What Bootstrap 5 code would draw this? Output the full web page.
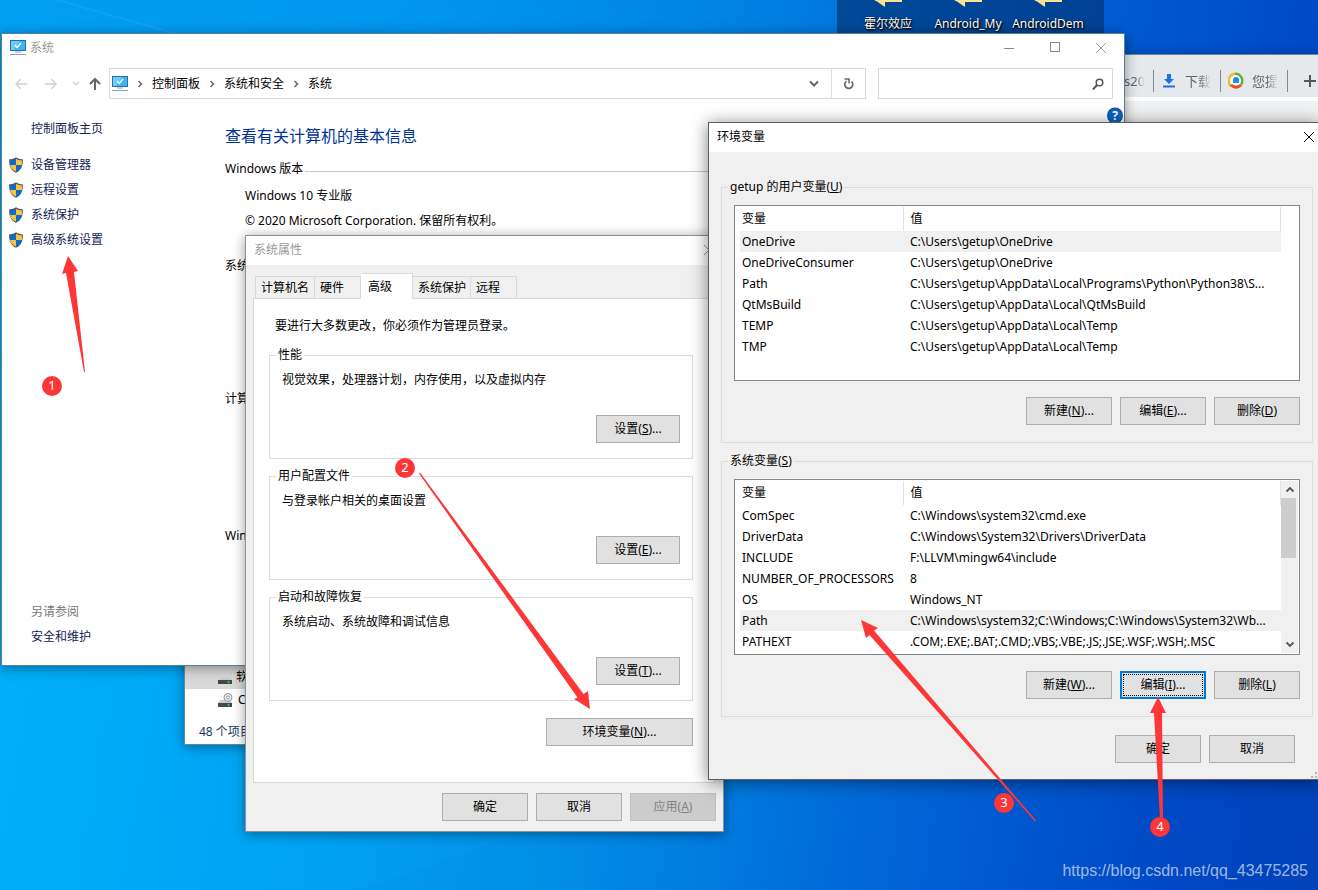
<!DOCTYPE html>
<html lang="zh-CN">
<head>
<meta charset="utf-8">
<meta name="viewport" content="width=device-width, initial-scale=1">
<title>环境变量</title>
<link href="https://cdn.jsdelivr.net/npm/bootstrap@5.3.0/dist/css/bootstrap.min.css" rel="stylesheet">
<style>
  body { font-family: "Noto Sans", "Noto Sans CJK SC", sans-serif; font-size: 12px; line-height: 16px; color: #000; }
  button, input { font: inherit; }
  a { text-decoration: none; }
  .desktop { background: linear-gradient(174deg, rgba(0,80,210,.2), transparent 45%), linear-gradient(100deg, #00b2fb 0%, #00a5f5 28%, #0090e8 48%, #0074dc 62%, #0058d0 78%, #0048c4 90%, #0042b8 100%); }
  .beam { inset: 0; width: 100%; height: 100%; }

  /* windows placed on the desktop */
  .win { position: absolute; display: flex; flex-direction: column; background: #fff; border: 1px solid #8b8b8b; box-shadow: 0 2px 12px rgba(0,0,0,.4); }
  .win-system { left: 1px; top: 33px; right: 193px; height: 633px; border-color: #5a7f99; }
  .win-props { left: 245px; top: 235px; width: 479px; height: 597px; background: #f0f0f0; border-color: #8a9399; }
  .win-env { left: 708px; top: 122px; right: -2px; height: 658px; background: #f0f0f0; border-color: #5c6064; box-shadow: 0 2px 16px rgba(0,0,0,.5); }
  .win-browser { left: 1100px; top: 54px; right: -2px; height: 120px; border-color: #6f8298; }
  .win-explorer { left: 184px; top: 640px; width: 90px; height: 105px; border-color: #68889a; }
  .titlebar { display: flex; align-items: center; background: #fff; height: 29px; flex: none; padding-bottom: 2px; }
  .muted-title { color: #999; }
  .icon-btn { border: 0; background: none; padding: 0; display: flex; align-items: center; justify-content: center; }
  .cap-btn { width: 46px; height: 27px; }

  .files { left: 837px; top: 0; width: 267px; height: 36px; background: rgba(0,56,124,.72); padding: 0 16px 0 11px; }
  .files .item { width: 80px; color: #fff; text-shadow: 0 1px 2px #000, 1px 1px 2px #000; font-size: 12px; white-space: nowrap; }

  .tabstrip { height: 42px; background: #e6e9ec; padding-top: 9px; color: #5f6368; font-size: 13px; }
  .tabstrip .tab-end { border-right: 1px solid #85888c; width: 67px; height: 22px; padding: 0 7px; display: flex; align-items: center; gap: 8px; white-space: nowrap; }
  .tabstrip .tab-end:first-child { width: 53px; padding-left: 23px; }
  .fade-text { -webkit-mask-image: linear-gradient(90deg, #000 55%, transparent); mask-image: linear-gradient(90deg, #000 55%, transparent); }
  .tools { background: #f1f2f3; margin-top: 4px; }

  .navrow { padding: 5px 11px 0 9px; height: 36px; }
  .crumbbox { border: 1px solid #d9d9d9; height: 31px; padding-left: 2px; }
  .crumbbox a { color: #000; }
  .crumb-sep { margin: 0 9px; flex: none; }
  .searchbox { border: 1px solid #d9d9d9; height: 31px; width: 235px; margin-left: 12px; }
  .searchbox input { border: 0; outline: 0; min-width: 0; }
  .side { width: 200px; padding: 17px 0 16px 6px; }
  .side a { color: #151c58; }
  .task { display: flex; align-items: center; height: 25px; gap: 7px; }
  .side .no-icon { padding-left: 23px; }
  .side .home { margin-bottom: 11px; }
  .info { padding: 25px 0 0 23px; }
  .info h1 { font-size: 16px; line-height: 24px; color: #003399; font-weight: 400; margin: 0 0 13px; }
  .info h2 { font-size: 12px; line-height: 16px; font-weight: 400; margin: 0; display: flex; align-items: center; gap: 2px; white-space: nowrap; }
  .info h2::after { content: ""; flex: 1; border-top: 1px solid #c8c8c8; margin-top: 5px; }
  .sec { padding: 6px 0 0 20px; height: 81px; }

  /* classic dialog controls */
  .dlg { background: #e1e1e1; border: 1px solid #adadad; height: 28px; width: 86px; padding: 0; color: #000; border-radius: 0; }
  .dlg-set { width: 84px; }
  .dlg-env { width: 147px; }
  .dlg:disabled { background: #ccc; border-color: #bfbfbf; color: #838383; }
  .dlg-focus { border: 2px solid #0078d7; outline: 1px dotted #000; outline-offset: -4px; }
  .tabs { height: 34px; padding: 8px 0 0 9px; }
  .tabs button { border: 1px solid #d9d9d9; border-bottom: 0; border-left-width: 0; background: #f0f0f0; height: 23px; padding: 0 5px; text-align: left; white-space: nowrap; margin-top: 3px; }
  .tabs button:first-child { border-left-width: 1px; }
  .tabs .active { background: #fff; height: 26px; margin: 0; padding: 0 7px; position: relative; z-index: 1; }
  .w-a { width: 60px; } .w-b { width: 46px; } .w-c { width: 52px; } .w-d { width: 58px; }
  .panel { background: #fff; border: 1px solid #d9d9d9; margin: -1px 8px 0 7px; height: 485px; padding: 19px 21px 0 15px; }
  .panel p { margin: 0 0 13px; padding-left: 6px; }
  .panel-text { padding: 9px 0 27px; }
  .group { border: 1px solid #dcdcdc; padding: 0 12px; margin: 0 0 9px; }
  .group legend { float: none; width: auto; font-size: 12px; line-height: 16px; padding: 0 2px; margin: 0 0 0 -6px; }
  .panel .group { height: 112px; }
  .foot-props { padding: 10px 7px 0; }
  .env-body { padding: 27px 6px 0 12px; }
  .env-body .group { height: 264px; margin-bottom: 10px; }
  .foot-env { padding: 8px 24px 0; }
  .grip { right: 2px; bottom: 1px; }

  .vars { border: 1px solid #828790; background: #fff; height: 176px; margin-top: 10px; padding: 1px 1px 1px 5px; }
  .vars table { table-layout: fixed; width: 100%; }
  .vars th, .vars td { height: 21px; padding: 0 0 0 2px; line-height: 21px; font-weight: 400; white-space: nowrap; }
  .vars th { height: 24px; line-height: 24px; border-right: 1px solid #e2e2e2; }
  .vars th + th, .vars td + td { padding-left: 7px; }
  .vars .picked { background: #f0f0f0; }
  .col-name { width: 163px; }
  .bar { width: 17px; flex: none; }
  .bar-on { background: #f0f0f0; }
  .thumb { height: 60px; width: 15px; background: #cdcdcd; }

  .marks { inset: 0; width: 100%; height: 100%; pointer-events: none; font-size: 13px; }
  .watermark { right: 10px; bottom: 8px; font: 16px/22px "Liberation Sans", Arial, sans-serif; color: rgba(255,255,255,.62); }
</style>
</head>
<body>
<svg width="0" height="0" class="position-absolute" aria-hidden="true">
  <symbol id="pc" viewBox="0 0 16 16">
    <rect x=".5" y=".5" width="15" height="10" fill="#3db5f5" stroke="#2a6fa5"/>
    <path d="M1 1h9L4 10H1z" fill="#6dcbf8"/>
    <path d="M5 5.3l2.2 2.2L11 3" fill="none" stroke="#fff" stroke-width="1.4"/>
    <path d="M5 12h6M0 14.5h16" stroke="#8aa3b8" stroke-width="1.2"/>
  </symbol>
  <symbol id="shield" viewBox="0 0 16 16">
    <path d="M8 .3C6 1.700 3.600 2.300 1.200 2.300c-.3 6 1.300 11 6.800 13.400 5.500-2.400 7.100-7.400 6.800-13.400C12.400 2.300 10 1.700 8 .3z" fill="#4b555e"/>
    <path d="M8 1.700V8H2.100C2 6.500 2 5 2.200 3.300 4.300 3.200 6.300 2.700 8 1.700z" fill="#0a6cce"/>
    <path d="M8 1.700V8h5.900c.1-1.500.1-3-.1-4.700C11.700 3.200 9.700 2.700 8 1.700z" fill="#ffc23c"/>
    <path d="M2.100 8H8v6.600C4.700 13.200 2.700 11.100 2.100 8z" fill="#ffc23c"/>
    <path d="M13.900 8H8v6.600c3.300-1.400 5.300-3.500 5.900-6.600z" fill="#0a6cce"/>
  </symbol>
  <symbol id="chev" viewBox="0 0 6 8"><path d="M1.500 1l3 3-3 3" fill="none" stroke="#666" stroke-width="1.500"/></symbol>
  <symbol id="close" viewBox="0 0 12 12"><path d="M1 1l10 10M11 1L1 11" fill="none" stroke="currentColor"/></symbol>
  <symbol id="folder" viewBox="0 0 28 8"><path d="M0 0h28v2H11v5L3 1.500z" fill="#ffe192"/></symbol>
</svg>

<div class="desktop position-relative overflow-hidden vh-100">
  <svg class="beam position-absolute" aria-hidden="true">
    <path d="M50 -2L190 38" stroke="#18a8ff" stroke-width="2" opacity=".5"/>
    <path d="M340 896L620 800L720 760V890z" fill="#0080e8" opacity=".12"/>
  </svg>

  <div class="files position-absolute d-flex text-center">
    <div class="item"><svg width="28" height="8" class="d-block mx-auto mb-2"><use href="#folder"/></svg><span>霍尔效应</span></div>
    <div class="item"><svg width="28" height="8" class="d-block mx-auto mb-2"><use href="#folder"/></svg><span>Android_My</span></div>
    <div class="item"><svg width="28" height="8" class="d-block mx-auto mb-2"><use href="#folder"/></svg><span>AndroidDem</span></div>
  </div>

  <section class="win win-browser" aria-label="浏览器">
    <div class="tabstrip d-flex align-items-center">
      <div class="tab-end"><span class="fade-text">s20</span></div>
      <div class="tab-end">
        <svg width="16" height="14" viewBox="-1 0 16 14"><path d="M5 0h4v5h3L7 10 2 5h3zM1 11.500h12v2H1z" fill="#1a73e8"/></svg>
        <span class="fade-text">下载</span>
      </div>
      <div class="tab-end">
        <svg width="16" height="17" viewBox="0 0 16 17"><circle cx="8" cy="8.500" r="7.500" fill="#fff"/><path d="M3 14A7 7 0 0 1 7 1.800" fill="none" stroke="#f9b91c" stroke-width="2.500"/><path d="M7 1.800a7 7 0 0 1 6 11" fill="none" stroke="#5cb531" stroke-width="2.500"/><path d="M3 13q5 4.500 10 0" fill="none" stroke="#f0461e" stroke-width="3"/><path d="M8 5a3 3 0 0 1 3 3v3H5V8a3 3 0 0 1 3-3" fill="#1d8fe0"/></svg>
        <span class="fade-text">您提</span>
      </div>
      <button class="icon-btn ms-3" aria-label="新标签页"><svg width="12" height="12"><path d="M6 0v12M0 6h12" stroke="#555" stroke-width="2"/></svg></button>
    </div>
    <div class="tools flex-grow-1"></div>
  </section>

  <section class="win win-explorer" aria-label="资源管理器">
    <div class="d-flex align-items-end pb-1" style="height:48px;background:#d9d9d9;padding-left:33px">
      <svg width="14" height="16" class="me-1"><path d="M2 9h10l2 3H0z" fill="#c9cdcf"/><rect y="11" width="14" height="4" fill="#42484b"/><circle cx="10.500" cy="13" r="1" fill="#2fe04a"/></svg>
      <span>软件</span>
    </div>
    <div class="d-flex align-items-center text-nowrap" style="height:22px;padding-left:33px">
      <svg width="16" height="16" class="me-1"><path d="M2 8h10l2 3H0z" fill="#c9cdcf"/><rect y="11" width="14" height="4" fill="#42484b"/><circle cx="10.500" cy="13" r="1" fill="#2fe04a"/><circle cx="10" cy="5.500" r="4" fill="#e8ebec" stroke="#90979a"/><circle cx="10" cy="5.500" r="1.500" fill="#fff" stroke="#90979a"/></svg>
      <span>CD</span>
    </div>
    <div class="text-nowrap" style="padding:13px 0 0 14px;color:#1e395b">48 个项目</div>
  </section>

  <main class="win win-system">
    <header class="titlebar ps-2">
      <svg width="16" height="16" class="me-1"><use href="#pc"/></svg>
      <span class="muted-title flex-grow-1">系统</span>
      <button class="icon-btn cap-btn" aria-label="最小化"><svg width="10" height="10"><path d="M0 5.500h10" stroke="#888"/></svg></button>
      <button class="icon-btn cap-btn" aria-label="最大化"><svg width="11" height="11"><rect x=".5" y=".5" width="9" height="9" fill="none" stroke="#888"/></svg></button>
      <button class="icon-btn cap-btn muted-title" aria-label="关闭"><svg width="12" height="12"><use href="#close"/></svg></button>
    </header>
    <div class="navrow d-flex align-items-center">
      <button class="icon-btn px-1" aria-label="后退"><svg width="12" height="12"><path d="M12 6H1M6 1L1 6l5 5" fill="none" stroke="#d2d2d2" stroke-width="1.500"/></svg></button>
      <button class="icon-btn px-1 ms-2 me-1" aria-label="前进"><svg width="16" height="12"><path d="M2 6h11M8 1l5 5-5 5" fill="none" stroke="#d2d2d2" stroke-width="1.500"/></svg></button>
      <button class="icon-btn px-1" aria-label="最近"><svg width="10" height="8"><path d="M2 2l3 3 3-3" fill="none" stroke="#ccc" stroke-width="1.200"/></svg></button>
      <button class="icon-btn ps-1 pe-2" aria-label="上移"><svg width="12" height="14"><path d="M6 13V2M1 7l5-5 5 5" fill="none" stroke="#666" stroke-width="2"/></svg></button>
      <nav class="crumbbox d-flex align-items-center flex-grow-1" aria-label="地址">
        <svg width="16" height="16"><use href="#pc"/></svg>
        <svg width="6" height="8" class="crumb-sep"><use href="#chev"/></svg>
        <a href="#">控制面板</a>
        <svg width="6" height="8" class="crumb-sep"><use href="#chev"/></svg>
        <a href="#">系统和安全</a>
        <svg width="6" height="8" class="crumb-sep"><use href="#chev"/></svg>
        <a href="#">系统</a>
        <button class="icon-btn ms-auto me-2 px-1" aria-label="展开"><svg width="10" height="8"><path d="M1 1.500l4 4 4-4" fill="none" stroke="#666" stroke-width="2"/></svg></button>
        <button class="icon-btn border-start h-100" style="width:34px" aria-label="刷新"><svg width="12" height="14" viewBox="0 0 12 14"><path d="M8.500 4.500a4 4 0 1 1-5-.4" fill="none" stroke="#666" stroke-width="1.700"/><path d="M1.500 2H6v4.500" fill="none" stroke="#666" stroke-width="1.500"/></svg></button>
      </nav>
      <div class="searchbox d-flex align-items-center pe-2">
        <input type="text" class="flex-grow-1" aria-label="搜索">
        <svg width="12" height="12"><circle cx="7.500" cy="4.500" r="3.300" fill="none" stroke="#555" stroke-width="1.500"/><path d="M5 7L1 11.500" stroke="#555" stroke-width="2"/></svg>
      </div>
    </div>
    <div class="d-flex flex-grow-1">
      <aside class="side d-flex flex-column">
        <a href="#" class="task no-icon home">控制面板主页</a>
        <a href="#" class="task"><svg width="16" height="16"><use href="#shield"/></svg>设备管理器</a>
        <a href="#" class="task"><svg width="16" height="16"><use href="#shield"/></svg>远程设置</a>
        <a href="#" class="task"><svg width="16" height="16"><use href="#shield"/></svg>系统保护</a>
        <a href="#" class="task"><svg width="16" height="16"><use href="#shield"/></svg>高级系统设置</a>
        <span class="task no-icon mt-auto" style="color:#777">另请参阅</span>
        <a href="#" class="task no-icon">安全和维护</a>
      </aside>
      <div class="info flex-grow-1">
        <h1>查看有关计算机的基本信息</h1>
        <h2>Windows 版本</h2>
        <div class="sec">
          <div class="task">Windows 10 专业版</div>
          <div class="task">© 2020 Microsoft Corporation. 保留所有权利。</div>
        </div>
        <h2 style="height:133px" class="align-items-start">系统</h2>
        <h2 style="height:137px" class="align-items-start">计算机名、域和工作组设置</h2>
        <h2>Windows 激活</h2>
      </div>
      <div class="pt-2">
        <button class="icon-btn" aria-label="帮助"><svg width="17" height="17"><circle cx="8" cy="8.500" r="8" fill="#0b4f8f"/><circle cx="8" cy="8.500" r="7" fill="#0a66c2"/><text x="8" y="13" fill="#fff" font-weight="700" font-size="12" text-anchor="middle">?</text></svg></button>
      </div>
    </div>
  </main>

  <section class="win win-props" role="dialog" aria-label="系统属性">
    <header class="titlebar ps-2 pe-2">
      <span class="muted-title flex-grow-1">系统属性</span>
      <button class="icon-btn muted-title" aria-label="关闭"><svg width="12" height="12"><use href="#close"/></svg></button>
    </header>
    <div class="tabs d-flex" role="tablist">
      <button class="w-a" role="tab">计算机名</button>
      <button class="w-b" role="tab">硬件</button>
      <button class="w-c active" role="tab" aria-selected="true">高级</button>
      <button class="w-d" role="tab">系统保护</button>
      <button class="w-b" role="tab">远程</button>
    </div>
    <div class="panel" role="tabpanel">
      <p>要进行大多数更改，你必须作为管理员登录。</p>
      <fieldset class="group">
        <legend>性能</legend>
        <div class="panel-text">视觉效果，处理器计划，内存使用，以及虚拟内存</div>
        <div class="text-end"><button class="dlg dlg-set">设置(<u>S</u>)...</button></div>
      </fieldset>
      <fieldset class="group">
        <legend>用户配置文件</legend>
        <div class="panel-text">与登录帐户相关的桌面设置</div>
        <div class="text-end"><button class="dlg dlg-set">设置(<u>E</u>)...</button></div>
      </fieldset>
      <fieldset class="group">
        <legend>启动和故障恢复</legend>
        <div class="panel-text">系统启动、系统故障和调试信息</div>
        <div class="text-end"><button class="dlg dlg-set">设置(<u>T</u>)...</button></div>
      </fieldset>
      <div class="text-end pt-2"><button class="dlg dlg-env">环境变量(<u>N</u>)...</button></div>
    </div>
    <footer class="foot-props d-flex justify-content-end gap-2">
      <button class="dlg">确定</button>
      <button class="dlg">取消</button>
      <button class="dlg" disabled>应用(<u>A</u>)</button>
    </footer>
  </section>

  <section class="win win-env" role="dialog" aria-label="环境变量">
    <header class="titlebar ps-2">
      <span class="flex-grow-1">环境变量</span>
      <button class="icon-btn me-1" aria-label="关闭"><svg width="12" height="12"><use href="#close"/></svg></button>
    </header>
    <div class="env-body">
      <fieldset class="group">
        <legend>getup 的用户变量(<u>U</u>)</legend>
        <div class="vars d-flex">
          <div class="flex-grow-1">
            <table>
              <colgroup><col class="col-name"><col></colgroup>
              <thead><tr><th>变量</th><th>值</th></tr></thead>
              <tbody>
                <tr class="picked"><td>OneDrive</td><td>C:\Users\getup\OneDrive</td></tr>
                <tr><td>OneDriveConsumer</td><td>C:\Users\getup\OneDrive</td></tr>
                <tr><td>Path</td><td>C:\Users\getup\AppData\Local\Programs\Python\Python38\S...</td></tr>
                <tr><td>QtMsBuild</td><td>C:\Users\getup\AppData\Local\QtMsBuild</td></tr>
                <tr><td>TEMP</td><td>C:\Users\getup\AppData\Local\Temp</td></tr>
                <tr><td>TMP</td><td>C:\Users\getup\AppData\Local\Temp</td></tr>
              </tbody>
            </table>
          </div>
          <div class="bar"></div>
        </div>
        <div class="d-flex justify-content-end gap-2 pt-3">
          <button class="dlg">新建(<u>N</u>)...</button>
          <button class="dlg">编辑(<u>E</u>)...</button>
          <button class="dlg">删除(<u>D</u>)</button>
        </div>
      </fieldset>
      <fieldset class="group">
        <legend>系统变量(<u>S</u>)</legend>
        <div class="vars d-flex">
          <div class="flex-grow-1">
            <table>
              <colgroup><col class="col-name"><col></colgroup>
              <thead><tr><th>变量</th><th>值</th></tr></thead>
              <tbody>
                <tr><td>ComSpec</td><td>C:\Windows\system32\cmd.exe</td></tr>
                <tr><td>DriverData</td><td>C:\Windows\System32\Drivers\DriverData</td></tr>
                <tr><td>INCLUDE</td><td>F:\LLVM\mingw64\include</td></tr>
                <tr><td>NUMBER_OF_PROCESSORS</td><td>8</td></tr>
                <tr><td>OS</td><td>Windows_NT</td></tr>
                <tr class="picked"><td>Path</td><td>C:\Windows\system32;C:\Windows;C:\Windows\System32\Wb...</td></tr>
                <tr><td>PATHEXT</td><td>.COM;.EXE;.BAT;.CMD;.VBS;.VBE;.JS;.JSE;.WSF;.WSH;.MSC</td></tr>
              </tbody>
            </table>
          </div>
          <div class="bar bar-on d-flex flex-column">
            <button class="icon-btn py-1" aria-label="向上滚动"><svg width="10" height="9"><path d="M1.500 6.500L5 3l3.500 3.500" fill="none" stroke="#555" stroke-width="1.800"/></svg></button>
            <div class="thumb"></div>
            <button class="icon-btn py-1 mt-auto" aria-label="向下滚动"><svg width="10" height="9"><path d="M1.500 2.500L5 6l3.500-3.500" fill="none" stroke="#555" stroke-width="1.800"/></svg></button>
          </div>
        </div>
        <div class="d-flex justify-content-end gap-2 pt-3">
          <button class="dlg">新建(<u>W</u>)...</button>
          <button class="dlg dlg-focus">编辑(<u>I</u>)...</button>
          <button class="dlg">删除(<u>L</u>)</button>
        </div>
      </fieldset>
    </div>
    <footer class="foot-env d-flex justify-content-end gap-2">
      <button class="dlg">确定</button>
      <button class="dlg">取消</button>
    </footer>
    <svg class="grip position-absolute" width="6" height="6" aria-hidden="true"><path d="M4 0h2v2H4zM0 4h2v2H0zM4 4h2v2H4z" fill="#b5b5b5"/></svg>
  </section>

  <!-- numbered steps drawn over the windows -->
  <svg class="marks position-absolute" fill="#fd3737">
    <path d="M68 256L78 271L74 272L85 372H84L66 273L62 274z"/>
    <path d="M590 709L588 691L583.500 694L420 472.500L419 473.500L577.500 697.500L574 699z"/>
    <path d="M861 620L878 628L874 630.500L1036 820.500L1035 821.500L869.500 635L866 638z"/>
    <path d="M1158 697L1166 713H1162L1163 820H1160L1154 713H1150z"/>
    <circle cx="52" cy="386" r="10"/><circle cx="405" cy="468" r="10"/><circle cx="1004" cy="803" r="10"/><circle cx="1160" cy="827" r="10"/>
    <g fill="#fff" text-anchor="middle"><text x="52" y="390">1</text><text x="405" y="472">2</text><text x="1004" y="807">3</text><text x="1160" y="831">4</text></g>
  </svg>
  <div class="watermark position-absolute">https://blog.csdn.net/qq_43475285</div>
</div>
<script src="https://cdn.jsdelivr.net/npm/bootstrap@5.3.0/dist/js/bootstrap.bundle.min.js"></script>
</body>
</html>
